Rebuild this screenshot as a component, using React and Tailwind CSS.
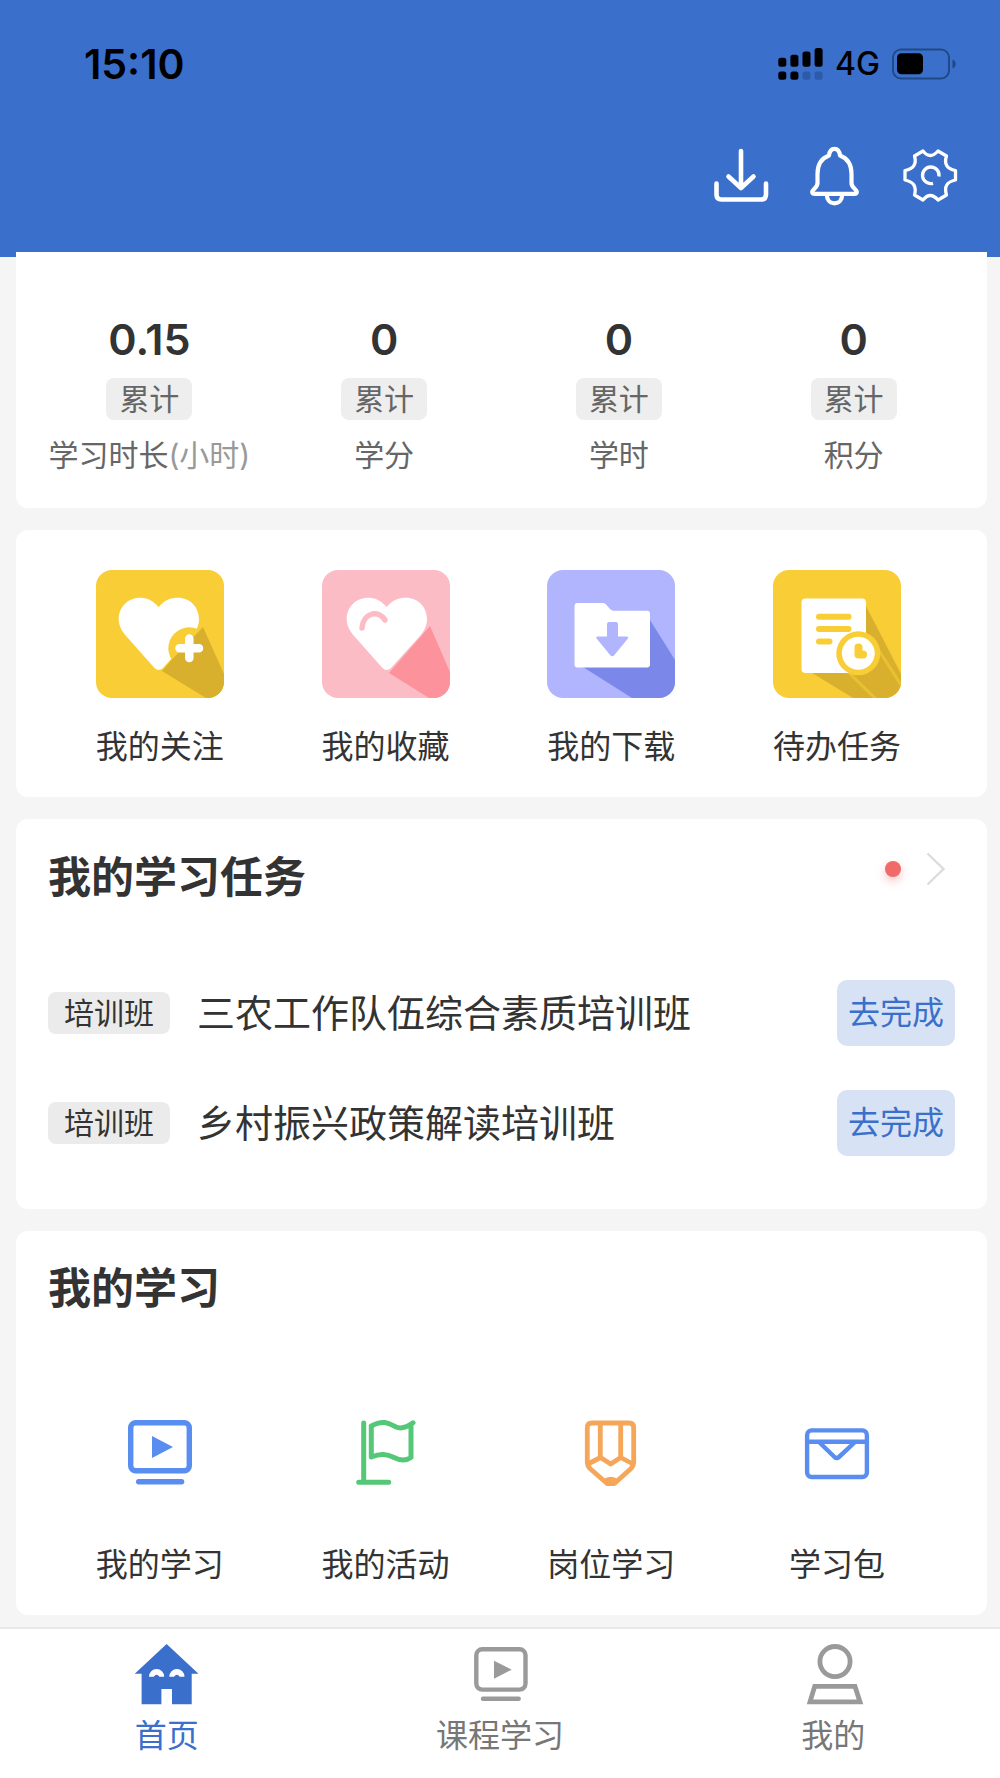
import React from "react";

/* ---------- status bar ---------- */

function Signal() {
  return (
    <svg className="h-8 w-[45px]" viewBox="0 0 45 32" aria-hidden="true">
      <rect x="0.3" y="9.7" width="8" height="9" rx="2.5" />
      <rect x="12.4" y="6.7" width="8" height="12" rx="2.5" />
      <rect x="24.5" y="3.6" width="8" height="15.1" rx="2.5" />
      <rect x="36.6" y="0" width="8" height="18.7" rx="2.5" />
      <rect x="0.3" y="23.4" width="8" height="8.4" rx="2.5" />
      <rect x="12.4" y="23.4" width="8" height="8.4" rx="2.5" />
      <rect x="24.5" y="23.4" width="8" height="8.4" rx="2.5" fill="#2c5ba9" />
      <rect x="36.6" y="23.4" width="8" height="8.4" rx="2.5" fill="#2c5ba9" />
    </svg>
  );
}

function Battery() {
  return (
    <svg className="h-8 w-16" viewBox="0 0 64 32" aria-hidden="true">
      <rect x="1" y="1.5" width="56" height="29" rx="8" fill="none" stroke="#1f4a86" strokeWidth="2" />
      <rect x="5" y="5.3" width="26" height="21" rx="4.5" />
      <path d="M60.5 11.5c4.2 1.3 4.2 7.7 0 9z" fill="#1f4a86" />
    </svg>
  );
}

/* ---------- header actions ---------- */

function DownloadIcon() {
  return (
    <svg className="size-15" viewBox="0 0 60 60" fill="none" stroke="#fff" strokeWidth="4.6" strokeLinecap="round" strokeLinejoin="round" aria-hidden="true">
      <path d="M4.5 37.5V48.5Q4.5 53.5 9.5 53.5H49Q54 53.5 54 48.5V37.5" />
      <path d="M29 5V41.5M16.5 30.5L29 42L41.5 30.5" />
    </svg>
  );
}

function BellIcon() {
  return (
    <svg className="size-15" viewBox="0 0 60 60" fill="none" stroke="#fff" strokeWidth="4.2" strokeLinecap="round" strokeLinejoin="round" aria-hidden="true">
      <path d="M23 9.5C23.5 5 25.5 2.8 28.5 2.8S33.500 5 34 9.5C42 12.500 45.500 19 45.500 28V37C45.500 42 50.500 43 50.800 46C50.800 47.500 50 47.800 48 47.800H9C7 47.800 6.200 47.500 6.200 46C6.500 43 11.500 42 11.500 37V28C11.500 19 15 12.500 23 9.500Z" />
      <path d="M20.800 48.500C20.800 54 24 57.300 28.500 57.300S36.200 54 36.200 48.500" />
    </svg>
  );
}

function GearIcon() {
  return (
    <svg className="size-15" viewBox="0 0 60 60" fill="none" stroke="#fff" strokeWidth="3.3" strokeLinejoin="round" aria-hidden="true">
      <path d="M14.5 10L23 5Q30 14 38 5L46.5 10Q42.5 22 55.5 24.5V34Q42.5 36.5 46.5 49L38 54Q30 45 23 54L14.5 49Q18 36.5 5 34V24.5Q18 22 14.5 10Z" />
      <path d="M39 30.5A8.3 8.3 0 1 0 33 37.3" />
    </svg>
  );
}

/* ---------- shortcut tiles ---------- */

const HEART =
  "M62.7 37C57 30 50 27.7 44 27.7C32 27.7 22.7 37 22.7 49C22.7 56 26 61.5 31 67L58.5 98Q62.7 102 67 98L95 67C100 61.5 103 56 103 49C103 37 94 27.7 82 27.7C75 27.7 68 30 62.7 37Z";

function Tile({ color, children }) {
  return (
    <svg className="size-32 rounded-2xl" viewBox="0 0 128 128" aria-hidden="true">
      <rect width="128" height="128" fill={color} />
      {children}
    </svg>
  );
}

function FollowTile() {
  return (
    <Tile color="#f8cd36">
      <path d={HEART} fill="#fff" />
      <circle cx="93.3" cy="78.3" r="21" fill="#f8cd36" />
      <path d="M66 101L76 89.5L107 57L128 104V128H110Z" fill="#d8b02d" />
      <path d="M93.3 68.5V88M83.5 78.3H103" stroke="#fff" strokeWidth="8.5" strokeLinecap="round" />
    </Tile>
  );
}

function FavoriteTile() {
  return (
    <Tile color="#fcbcc5">
      <path d="M67 103L108 56L128 102V128H107Z" fill="#fc929b" />
      <path d={HEART} fill="#fff" transform="translate(2 0)" />
      <path d="M40 58C41.5 43 56 39 63 50" fill="none" stroke="#fcbcc5" strokeWidth="5.5" strokeLinecap="round" />
    </Tile>
  );
}

function DownloadTile() {
  return (
    <Tile color="#b0b5fe">
      <path d="M36 97L103 50L128 90V128H85Z" fill="#7c87ea" />
      <path d="M30.5 33H56Q58 33 59.5 35L63 39Q64.5 40.7 66.5 40.7H100Q103 40.7 103 43.7V94.5Q103 97.5 100 97.5H30.5Q27.5 97.5 27.5 94.5V36Q27.5 33 30.5 33Z" fill="#fff" />
      <path d="M62 52H69Q71 52 71 54V66.5H79.5Q82.5 66.5 80.5 69L67 85.5Q65.3 87 63.5 85.5L50 69Q48 66.5 51 66.5H60V54Q60 52 62 52Z" fill="#b0b5fe" />
    </Tile>
  );
}

function TodoTile() {
  return (
    <Tile color="#f8cd36">
      <path d="M36 101L93 36L128 104V128H80Z" fill="#d8b02d" />
      <path d="M75 102L104 130M103 76L130 118" stroke="#e9c033" strokeWidth="3" />
      <rect x="28.5" y="28.5" width="64.5" height="74.5" rx="4" fill="#fff" />
      <g stroke="#f8cd36" strokeWidth="6" strokeLinecap="round" fill="none">
        <path d="M46 46.7H75.5M46 59H75.5M46 71.5H56.5" />
      </g>
      <circle cx="85.3" cy="83.3" r="22" fill="#f8cd36" />
      <circle cx="85.3" cy="83.3" r="16.5" fill="#fff" />
      <path d="M85.5 77.5V84.5H90" fill="none" stroke="#f8cd36" strokeWidth="8" strokeLinecap="round" strokeLinejoin="round" />
    </Tile>
  );
}

/* ---------- learning icons ---------- */

function ScreenIcon() {
  return (
    <svg className="size-17" viewBox="0 0 68 68" fill="none" stroke="#598df0" strokeWidth="5.4" strokeLinecap="round" aria-hidden="true">
      <rect x="4.7" y="4.7" width="58.6" height="48" rx="5" />
      <path d="M26 18L47 29L26 40Z" fill="#598df0" stroke="none" />
      <path d="M12.7 63.7H55.6" />
    </svg>
  );
}

function FlagIcon() {
  return (
    <svg className="size-17" viewBox="0 0 68 68" fill="none" stroke="#55c878" strokeWidth="5" strokeLinecap="round" strokeLinejoin="round" aria-hidden="true">
      <path d="M11.7 5V64M6.7 64.2H36.7" />
      <path d="M19.3 8C32 1 38 6 44 9Q51 12 61 4.8M59 7V39.5C54 43 48 42.5 42 39.5C35 36 29 35 19.3 39V8" />
    </svg>
  );
}

function PencilIcon() {
  return (
    <svg className="size-17" viewBox="0 0 68 68" fill="none" stroke="#f6a659" strokeWidth="4.8" strokeLinejoin="round" aria-hidden="true">
      <path d="M15 5H52Q56.7 5 56.7 10V44Q56.7 48 53.5 51L38 65Q33.7 68 29.5 65L13.500 51Q10.3 48 10.3 44V10Q10.3 5 15 5Z" />
      <path d="M23.300 5V39.500M43.700 5V39.500M11 46L23.500 39.500L33.700 46L43.700 39.500L56 46" />
      <path d="M26 61.500Q33.700 56 41.500 61.500L36 66.500Q33.700 68 31.500 66.500Z" fill="#f6a659" stroke="none" />
    </svg>
  );
}

function MailIcon() {
  return (
    <svg className="size-17" viewBox="0 0 68 68" fill="none" stroke="#598df0" strokeWidth="4.4" strokeLinejoin="round" aria-hidden="true">
      <rect x="4.1" y="12.4" width="59.8" height="46.6" rx="4.5" />
      <path d="M4 23.8H64M16.5 24.5L31.5 39Q33.8 41 36 39L51.5 24.5" />
    </svg>
  );
}

/* ---------- tab bar icons ---------- */

function HouseIcon() {
  return (
    <svg className="size-16" viewBox="0 0 64 64" fill="currentColor" aria-hidden="true">
      <path d="M31.6 2L63.5 31.7H56.7V62.3H37V47H26.4V62.3H6.6V31.7H-0.3Z" />
      <path d="M14 34.7A7.6 7.6 0 0 1 29.2 34.7H24.5Q21.6 31 18.7 34.7ZM34.3 34.7A7.6 7.6 0 0 1 49.5 34.7H44.8Q41.9 31 39 34.7Z" fill="#fff" />
    </svg>
  );
}

function CourseIcon() {
  return (
    <svg className="size-16" viewBox="0 0 64 64" fill="none" stroke="#9a9a9a" strokeWidth="4.4" strokeLinecap="round" aria-hidden="true">
      <rect x="8.3" y="7.3" width="49.2" height="40.3" rx="6" />
      <path d="M26 18.7L43.7 27.7L26 36.7Z" fill="#9a9a9a" stroke="none" />
      <path d="M15 56.7H50.7" />
    </svg>
  );
}

function PersonIcon() {
  return (
    <svg className="size-16" viewBox="0 0 64 64" fill="none" stroke="#9a9a9a" strokeWidth="4.8" aria-hidden="true">
      <circle cx="34" cy="19.6" r="15.1" />
      <path d="M13.7 44.4H54L59 59.9H9Z" />
    </svg>
  );
}

/* ---------- data ---------- */

const stats = [
  { value: "0.15", label: "学习时长", unit: "(小时)" },
  { value: "0", label: "学分" },
  { value: "0", label: "学时" },
  { value: "0", label: "积分" },
];

const shortcuts = [
  { label: "我的关注", Icon: FollowTile },
  { label: "我的收藏", Icon: FavoriteTile },
  { label: "我的下载", Icon: DownloadTile },
  { label: "待办任务", Icon: TodoTile },
];

const tasks = ["三农工作队伍综合素质培训班", "乡村振兴政策解读培训班"];

const learning = [
  { label: "我的学习", Icon: ScreenIcon },
  { label: "我的活动", Icon: FlagIcon },
  { label: "岗位学习", Icon: PencilIcon },
  { label: "学习包", Icon: MailIcon },
];

const tabs = [
  { label: "首页", Icon: HouseIcon, active: true },
  { label: "课程学习", Icon: CourseIcon },
  { label: "我的", Icon: PersonIcon },
];

export default function App() {
  return (
    <div className="flex min-h-screen flex-col bg-[#f5f5f5] font-['Inter','Noto_Sans_CJK_SC',sans-serif] text-[#333]">
      <header className="bg-[#3a6fcb] pb-[33px]">
        <div className="flex h-32 items-center justify-between pr-11 pl-21 text-black">
          <time className="text-[41px] leading-none font-semibold">15:10</time>
          <div className="flex items-center gap-3">
            <Signal />
            <span className="text-[32px] leading-9 font-medium">4G</span>
            <Battery />
          </div>
        </div>
        <div className="flex h-24 items-center justify-end gap-[34px] pr-10">
          <button type="button" aria-label="下载"><DownloadIcon /></button>
          <button type="button" aria-label="消息"><BellIcon /></button>
          <button type="button" aria-label="设置"><GearIcon /></button>
        </div>
      </header>

      <main className="-mt-[5px] flex flex-col gap-[22px] pr-[13px] pl-4">
        <section className="grid grid-cols-4 rounded-b-xl bg-white px-4 pt-[59px] pb-8">
          {stats.map((s) => (
            <div key={s.label} className="flex flex-col items-center">
              <strong className="text-[43px] leading-[56px] font-semibold">{s.value}</strong>
              <span className="mt-[11px] rounded-lg bg-[#eee] px-[13px] text-[30px] leading-[42px] text-[#666]">累计</span>
              <span className="mt-[14px] text-[30px] leading-[42px] whitespace-nowrap text-[#666]">
                {s.label}
                {s.unit && <span className="text-[#999]">{s.unit}</span>}
              </span>
            </div>
          ))}
        </section>

        <section className="grid grid-cols-4 rounded-xl bg-white pt-10 pr-[37px] pb-[30px] pl-[31px]">
          {shortcuts.map(({ label, Icon }) => (
            <a key={label} href="#" className="flex flex-col items-center gap-[29px] text-[32px] leading-10">
              <Icon />
              {label}
            </a>
          ))}
        </section>

        <section className="rounded-xl bg-white px-8 pt-[33px] pb-[53px]">
          <div className="flex items-start justify-between">
            <h2 className="text-[43px] leading-[50px] font-semibold">我的学习任务</h2>
            <button type="button" aria-label="查看全部" className="flex h-[34px] items-center gap-6 pr-2.5">
              <span className="size-4 rounded-full bg-[#ef6a69] shadow-[0_4px_10px_rgba(239,106,105,0.4)]" />
              <svg className="h-[34px] w-5" viewBox="0 0 20 34" fill="none" stroke="#dcdcdc" strokeWidth="2.4" aria-hidden="true">
                <path d="M2.5 1.500L18.500 17L2.500 32.500" />
              </svg>
            </button>
          </div>
          <ul className="mt-[78px] flex flex-col gap-11">
            {tasks.map((t) => (
              <li key={t} className="flex items-center">
                <span className="rounded-lg bg-[#ebebeb] px-4 text-[30px] leading-[42px]">培训班</span>
                <span className="ml-[27px] flex-1 text-[38px] leading-[48px]">{t}</span>
                <button type="button" className="rounded-[10px] bg-[#d7e3f4] px-[11px] text-[32px] leading-[66px] text-[#3a6fcb]">
                  去完成
                </button>
              </li>
            ))}
          </ul>
        </section>

        <section className="rounded-xl bg-white pt-8 pr-[37px] pb-[30px] pl-[31px]">
          <h2 className="pl-px text-[43px] leading-[50px] font-semibold">我的学习</h2>
          <div className="mt-[105px] grid grid-cols-4">
            {learning.map(({ label, Icon }) => (
              <a key={label} href="#" className="flex flex-col items-center gap-[59px] text-[32px] leading-10">
                <Icon />
                {label}
              </a>
            ))}
          </div>
        </section>
      </main>

      <nav className="mt-3 grid flex-1 grid-cols-3 border-t-2 border-[#e8e8e8] bg-white pt-[13px] pb-[22px]">
        {tabs.map(({ label, Icon, active }) => (
          <a
            key={label}
            href="#"
            aria-current={active ? "page" : undefined}
            className={
              active
                ? "flex flex-col items-center gap-2.5 text-[32px] leading-10 text-[#3a6fcb]"
                : "flex flex-col items-center gap-2.5 text-[32px] leading-10 text-[#777]"
            }
          >
            <Icon />
            {label}
          </a>
        ))}
      </nav>
    </div>
  );
}
